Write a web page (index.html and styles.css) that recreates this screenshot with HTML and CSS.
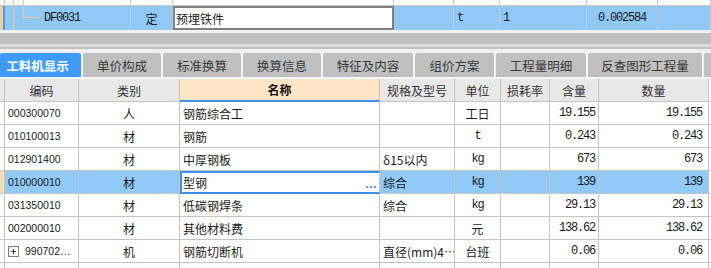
FILE: index.html
```html
<!DOCTYPE html>
<html lang="zh-CN">
  <head>
    <meta charset="UTF-8" />
    <title>工料机显示</title>
    <link rel="stylesheet" href="styles.css">
  </head>
  <body>
    <div class="tree-pane">
      <div class="tree-row tree-prev">
        <div class="tc"></div>
        <div class="tc"><svg class="branch" width="37" height="6"><path d="M8.5 0V6M18.5 0V6" stroke="#f0c896" fill="none"/></svg></div>
        <div class="tc"></div>
        <div class="tc"></div>
        <div class="tc"></div>
        <div class="tc"></div>
        <div class="tc"></div>
        <div class="tc"></div>
        <div class="tc"></div>
      </div>
      <div class="tree-row tree-sel">
        <div class="tc mark"></div>
        <div class="tc tree-code">
          <svg class="branch" width="37" height="24"><path d="M8.5 0V24M18.5 0V11.5H35" stroke="#f0c896" fill="none"/></svg>
          <span class="mono">DF0031</span>
        </div>
        <div class="tc ctr">定</div>
        <div class="tc edit-gray">预埋铁件</div>
        <div class="tc"></div>
        <div class="tc mono pad">t</div>
        <div class="tc mono pad">1</div>
        <div class="tc mono ctr">0.002584</div>
        <div class="tc"></div>
      </div>
    </div>

    <div class="splitter">
      <div class="bar"></div>
      <div class="bar-gap"></div>
      <div class="bar-thin"></div>
    </div>

    <div class="tabs">
      <div class="tab active w81">工料机显示</div>
      <div class="tab w78">单价构成</div>
      <div class="tab w78">标准换算</div>
      <div class="tab w78">换算信息</div>
      <div class="tab w90">特征及内容</div>
      <div class="tab w79">组价方案</div>
      <div class="tab w90">工程量明细</div>
      <div class="tab w114">反查图形工程量</div>
      <div class="tab rest"></div>
    </div>

    <div class="grid">
      <div class="row head">
        <div class="c"></div>
        <div class="c ctr">编码</div>
        <div class="c ctr">类别</div>
        <div class="c ctr name-head">名称</div>
        <div class="c ctr">规格及型号</div>
        <div class="c ctr">单位</div>
        <div class="c ctr">损耗率</div>
        <div class="c ctr">含量</div>
        <div class="c ctr">数量</div>
        <div class="c end"></div>
      </div>

      <div class="row">
        <div class="c"></div>
        <div class="c code">000300070</div>
        <div class="c ctr">人</div>
        <div class="c pad">钢筋综合工</div>
        <div class="c pad"></div>
        <div class="c ctr">工日</div>
        <div class="c"></div>
        <div class="c num">19.155</div>
        <div class="c num wide">19.155</div>
        <div class="c end"></div>
      </div>

      <div class="row">
        <div class="c"></div>
        <div class="c code">010100013</div>
        <div class="c ctr">材</div>
        <div class="c pad">钢筋</div>
        <div class="c pad"></div>
        <div class="c ctr mono">t</div>
        <div class="c"></div>
        <div class="c num">0.243</div>
        <div class="c num wide">0.243</div>
        <div class="c end"></div>
      </div>

      <div class="row">
        <div class="c"></div>
        <div class="c code">012901400</div>
        <div class="c ctr">材</div>
        <div class="c pad">中厚钢板</div>
        <div class="c pad">δ15以内</div>
        <div class="c ctr mono">kg</div>
        <div class="c"></div>
        <div class="c num">673</div>
        <div class="c num wide">673</div>
        <div class="c end"></div>
      </div>

      <div class="row selected">
        <div class="c mark"></div>
        <div class="c code">010000010</div>
        <div class="c ctr">材</div>
        <div class="c pad edit-blue">型钢<span class="more">…</span></div>
        <div class="c pad">综合</div>
        <div class="c ctr mono">kg</div>
        <div class="c"></div>
        <div class="c num">139</div>
        <div class="c num wide">139</div>
        <div class="c end"></div>
      </div>

      <div class="row">
        <div class="c"></div>
        <div class="c code">031350010</div>
        <div class="c ctr">材</div>
        <div class="c pad">低碳钢焊条</div>
        <div class="c pad">综合</div>
        <div class="c ctr mono">kg</div>
        <div class="c"></div>
        <div class="c num">29.13</div>
        <div class="c num wide">29.13</div>
        <div class="c end"></div>
      </div>

      <div class="row">
        <div class="c"></div>
        <div class="c code">002000010</div>
        <div class="c ctr">材</div>
        <div class="c pad">其他材料费</div>
        <div class="c pad"></div>
        <div class="c ctr">元</div>
        <div class="c"></div>
        <div class="c num">138.62</div>
        <div class="c num wide">138.62</div>
        <div class="c end"></div>
      </div>

      <div class="row">
        <div class="c"></div>
        <div class="c code">
          <svg class="expand" width="11" height="11"><rect x="0.5" y="0.5" width="10" height="10" fill="#fff" stroke="#808080"/><path d="M3 5.5H8M5.5 3V8" stroke="#333"/></svg>990702…
        </div>
        <div class="c ctr">机</div>
        <div class="c pad">钢筋切断机</div>
        <div class="c pad">直径(mm)4…</div>
        <div class="c ctr">台班</div>
        <div class="c"></div>
        <div class="c num">0.06</div>
        <div class="c num wide">0.06</div>
        <div class="c end"></div>
      </div>

      <div class="row">
        <div class="c"></div>
        <div class="c"></div>
        <div class="c"></div>
        <div class="c"></div>
        <div class="c"></div>
        <div class="c"></div>
        <div class="c"></div>
        <div class="c"></div>
        <div class="c"></div>
        <div class="c end"></div>
      </div>
    </div>
  </body>
</html>
```

FILE: styles.css
```css
body {
  margin: 0;
  width: 711px;
  height: 268px;
  overflow: hidden;
  background-color: #fff;
  font-family: "Noto Sans CJK SC", sans-serif;
  font-size: 12px;
  color: #1a1a1a;
}

.mono {
  font-family: "Liberation Mono", monospace;
  font-size: 12px;
  letter-spacing: -1.2px;
}

/* upper tree pane */

.tree-pane {
  height: 33px;
  background-color: #f2f2f2;
}

.tree-row {
  display: grid;
  grid-template-columns: 5px 126px 42px 221px 60px 46px 87px 71px 1fr;
}

.tree-prev {
  height: 6px;
  background-color: #fff;
  border-bottom: 1px solid #c8c8c8;
  box-sizing: border-box;
}

.tree-sel {
  height: 24px;
  background-color: #90c8f6;
}

.tc {
  display: flex;
  align-items: center;
  min-width: 0;
  border-right: 1px solid #c4c8cc;
  box-sizing: border-box;
  white-space: nowrap;
}

.tree-prev .tc {
  border-right-color: #c8c8c8;
}

.tree-sel .mark {
  background-color: #e9cfa8;
  border-right: 2px solid #4e9ae6;
}

.tree-code {
  gap: 2px;
}

.branch {
  display: block;
  flex: none;
}

.edit-gray {
  background-color: #fff;
  border: 2px solid #808080;
  padding-left: 1px;
}

/* splitter between panes */

.splitter {
  height: 20px;
  background-color: #f0f0f0;
}

.bar {
  height: 11px;
  background-color: #c0c0c0;
}

.bar-gap {
  height: 3px;
  background-color: #dadada;
}

.bar-thin {
  height: 2px;
  background-color: #c0c0c0;
}

/* tabs */

.tabs {
  display: flex;
  gap: 2px;
  height: 24px;
  padding-bottom: 2px;
  background-color: #f6f6f6;
}

.tab {
  flex: none;
  display: flex;
  align-items: center;
  justify-content: center;
  background-color: #c0c0c0;
  border-radius: 2px 2px 0 0;
  color: #3a3a3a;
  font-size: 12.5px;
  padding-top: 1px;
  box-sizing: border-box;
}

.tab.active {
  background-color: #3e9bfd;
  color: #fff;
  font-weight: bold;
  padding-right: 6px;
}

.w78 { width: 78px; }
.w79 { width: 79px; }
.w81 { width: 81px; }
.w90 { width: 90px; }
.w114 { width: 114px; }

.tab.rest {
  flex: 1;
}

/* material grid */

.grid {
  height: 189px;
  overflow: hidden;
}

.row {
  display: grid;
  grid-template-columns: 5px 74px 101px 200px 75px 46px 49px 49px 110px 1fr;
  height: 23px;
}

.c {
  display: flex;
  align-items: center;
  min-width: 0;
  border-right: 1px solid #c4c4c4;
  border-bottom: 1px solid #c4c4c4;
  box-sizing: border-box;
  white-space: nowrap;
  overflow: hidden;
}

.c.end {
  border-right: none;
}

.head .c {
  background-color: #e8e8e8;
  color: #333;
}

.head .name-head {
  background-color: #fde5c6;
  border-bottom: 2px solid #3d8fe8;
  font-weight: bold;
  color: #111;
}

.head .end {
  background-color: #fff;
}

.ctr {
  justify-content: center;
}

.pad {
  padding-left: 3px;
}

.code {
  padding-left: 3px;
  font-family: "Liberation Sans", sans-serif;
  font-size: 10.5px;
}

.expand {
  display: block;
  margin-right: 6px;
}

.num {
  justify-content: flex-end;
  padding-right: 3px;
  font-family: "Liberation Mono", monospace;
  font-size: 12px;
  letter-spacing: -1.2px;
}

.num.wide {
  padding-right: 6px;
}

.selected .c {
  background-color: #91c9f7;
}

.selected .mark {
  background-color: #f6dcb4;
}

.selected .end {
  background-color: #fff;
}

.selected .edit-blue {
  background-color: #fff;
  border-left: 2px solid #3d8fe8;
  border-top: 2px solid #3d8fe8;
  border-bottom: 2px solid #3d8fe8;
  padding-left: 1px;
  padding-right: 2px;
  justify-content: space-between;
}

.more {
  color: #3d8fe8;
  font-family: "Liberation Sans", sans-serif;
  font-weight: bold;
  margin-top: 2px;
}
```
